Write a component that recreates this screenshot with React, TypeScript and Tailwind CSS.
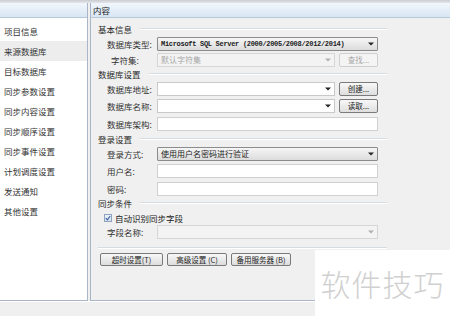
const cjk = { fontFamily: '"Noto Sans CJK SC", "Noto Sans", sans-serif' };

const navItems = [
  "项目信息",
  "来源数据库",
  "目标数据库",
  "同步参数设置",
  "同步内容设置",
  "同步顺序设置",
  "同步事件设置",
  "计划调度设置",
  "发送通知",
  "其他设置",
];

function Arrow({ muted }: { muted?: boolean }) {
  return (
    <svg width="6" height="4" viewBox="0 0 6 4" className="shrink-0">
      <path d="M0 0.5h6L3 3.5z" fill={muted ? "#b0b0b0" : "#222"} />
    </svg>
  );
}

function GroupTitle({ text, className }: { text: string; className?: string }) {
  return (
    <div className={`flex items-center h-3 ${className ?? ""}`}>
      <span className="text-[8.5px] text-[#2a2a2a] pr-2 whitespace-nowrap">{text}</span>
      <div className="flex-1 border-t border-[#d4dbe1] border-b-white border-b" />
    </div>
  );
}

function Row({
  label,
  children,
  className,
  indent,
}: {
  label: string;
  children: React.ReactNode;
  className?: string;
  indent?: boolean;
}) {
  return (
    <div className={`flex items-center h-[14px] ${className ?? ""}`}>
      <span
        className={`w-[50px] shrink-0 text-[8.5px] text-[#333] whitespace-nowrap ${indent ? "pl-[4px]" : ""}`}
      >
        {label}
      </span>
      <div className="flex-1 flex items-center gap-[4px] h-full">{children}</div>
    </div>
  );
}

function Btn({ text, disabled }: { text: string; disabled?: boolean }) {
  return (
    <div
      className={`w-[39px] h-[14px] shrink-0 flex items-center justify-center rounded-[2px] border text-[7.5px] ${
        disabled
          ? "border-[#cfcfcf] bg-[#f4f4f4] text-[#a8a8a8]"
          : "border-[#7a7a7a] bg-gradient-to-b from-[#f8f8f8] to-[#dedede] text-[#222]"
      }`}
    >
      {text}
    </div>
  );
}

export default function App() {
  return (
    <div
      className="w-[450px] h-[316px] bg-[#f0f0f0] relative overflow-hidden flex flex-col"
      style={cjk}
    >
      <div className="h-[3px] bg-gradient-to-b from-[#c9ccd1] to-[#e4e6e9]" />
      <div className="flex h-[298px] gap-[2px]">
        {/* left nav */}
        <div className="w-[88px] bg-white border-r border-b border-[#a9b6c7] flex flex-col">
          <div className="h-[15px] bg-gradient-to-b from-[#f1f6fb] to-[#d9e6f4] border-b border-[#b9c8d9]" />
          <div className="pt-[3px] flex flex-col">
            {navItems.map((t, i) => (
              <div
                key={t}
                className={`h-5 flex items-center pl-[4px] text-[8.5px] text-[#333] ${
                  i === 1 ? "bg-[#ededed]" : ""
                }`}
              >
                {t}
              </div>
            ))}
          </div>
        </div>

        {/* content */}
        <div className="flex-1 border-l border-b border-[#a9b6c7] flex flex-col">
          <div className="h-[15px] bg-gradient-to-b from-[#f1f6fb] to-[#d9e6f4] border-b border-[#b9c8d9] flex items-center pl-[2px] text-[8.5px] text-[#222]">
            内容
          </div>
          <div className="pl-[7px] w-[296px] flex flex-col">
            <GroupTitle text="基本信息" className="mt-[5px]" />
            <div className="pl-[9px] pr-[9px] flex flex-col">
              <Row label="数据库类型:" className="mt-[2px]">
                <div className="flex-1 h-full flex items-center justify-between px-[3px] border border-[#8c8c8c] rounded-[1px] bg-gradient-to-b from-[#f6f6f6] to-[#dcdcdc]">
                  <span
                    className="text-[7px] font-bold text-[#222] whitespace-nowrap tracking-[-0.3px]"
                    style={{ fontFamily: '"Liberation Mono", monospace' }}
                  >
                    Microsoft SQL Server (2000/2005/2008/2012/2014)
                  </span>
                  <Arrow />
                </div>
              </Row>
              <Row label="字符集:" indent className="mt-[2px]">
                <div className="flex-1 h-full flex items-center justify-between px-[3px] border border-[#d6d6d6] bg-[#f3f3f3]">
                  <span className="text-[8px] text-[#a8a8a8]">默认字符集</span>
                  <Arrow muted />
                </div>
                <Btn text="查找..." disabled />
              </Row>
            </div>

            <GroupTitle text="数据库设置" className="mt-[1px]" />
            <div className="pl-[9px] pr-[9px] flex flex-col">
              <Row label="数据库地址:" className="mt-[2px]">
                <div className="flex-1 h-full flex items-center justify-end px-[3px] border border-[#c9c9c9] bg-white">
                  <Arrow />
                </div>
                <Btn text="创建..." />
              </Row>
              <Row label="数据库名称:" className="mt-[3px]">
                <div className="flex-1 h-full flex items-center justify-end px-[3px] border border-[#c9c9c9] bg-white">
                  <Arrow />
                </div>
                <Btn text="读取..." />
              </Row>
              <Row label="数据库架构:" className="mt-[4px]">
                <div className="flex-1 h-full border border-[#d0d0d0] bg-white" />
              </Row>
            </div>

            <GroupTitle text="登录设置" className="mt-[2px]" />
            <div className="pl-[9px] pr-[9px] flex flex-col">
              <Row label="登录方式:" className="mt-[2px]">
                <div className="flex-1 h-full flex items-center justify-between px-[3px] border border-[#8c8c8c] rounded-[1px] bg-gradient-to-b from-[#f6f6f6] to-[#dcdcdc]">
                  <span className="text-[8px] text-[#222]">使用用户名密码进行验证</span>
                  <Arrow />
                </div>
              </Row>
              <Row label="用户名:" className="mt-[3px]">
                <div className="flex-1 h-full border border-[#d0d0d0] bg-white" />
              </Row>
              <Row label="密码:" className="mt-[4px]">
                <div className="flex-1 h-full border border-[#d0d0d0] bg-white" />
              </Row>
            </div>

            <GroupTitle text="同步条件" className="mt-[1px]" />
            <div className="pl-[6px] pr-[9px] flex flex-col">
              <div className="flex items-center h-3 mt-[3px] gap-[3px]">
                <div className="w-[8px] h-[8px] border border-[#8ea3bd] bg-gradient-to-b from-[#eef3fa] to-[#d8e3f0] flex items-center justify-center">
                  <svg width="6" height="6" viewBox="0 0 6 6">
                    <path d="M0.8 3.2 2.4 4.8 5.2 1" stroke="#3a62a8" strokeWidth="1.2" fill="none" />
                  </svg>
                </div>
                <span className="text-[8.5px] text-[#222]">自动识别同步字段</span>
              </div>
              <div className="pl-[3px]">
                <Row label="字段名称:" className="mt-[1px]">
                  <div className="flex-1 h-full flex items-center justify-end px-[3px] border border-[#d6d6d6] bg-[#f3f3f3]">
                    <Arrow muted />
                  </div>
                </Row>
              </div>
            </div>

            <div className="mt-[8px] border-t border-[#d4dbe1] border-b border-b-white" />
            <div className="flex gap-[4px] pl-[2px] mt-[4px]">
              {["超时设置(T)", "高级设置 (C)", "备用服务器 (B)"].map((t, i) => (
                <div
                  key={t}
                  className={`${i === 0 ? "w-[63px]" : "w-[60px]"} h-[13px] flex items-center justify-center rounded-[2px] border border-[#7a7a7a] bg-gradient-to-b from-[#f8f8f8] to-[#dcdcdc] text-[7.5px] text-[#222] whitespace-nowrap`}
                >
                  {t}
                </div>
              ))}
            </div>
          </div>
        </div>
      </div>
      <div className="flex-1 border-t border-white" />

      <div className="absolute left-[315px] top-[250px] w-[135px] h-[66px] bg-white flex items-center justify-center">
        <span className="text-[30px] font-light text-[#d0d0d0] tracking-[1px] leading-none">
          软件技巧
        </span>
      </div>
    </div>
  );
}
